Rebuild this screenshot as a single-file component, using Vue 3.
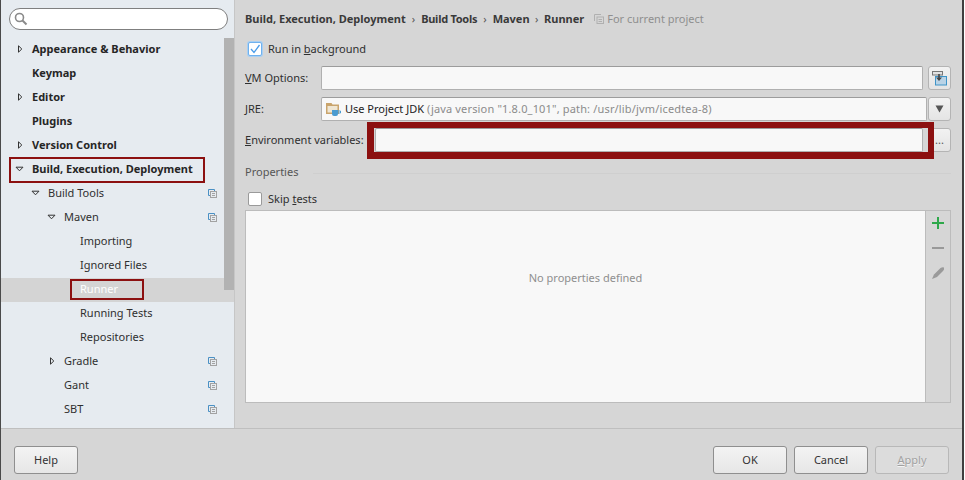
<script setup>
const nodes = [
  { label: 'Appearance & Behavior', depth: 0, bold: true, arrow: 'right' },
  { label: 'Keymap', depth: 0, bold: true },
  { label: 'Editor', depth: 0, bold: true, arrow: 'right' },
  { label: 'Plugins', depth: 0, bold: true },
  { label: 'Version Control', depth: 0, bold: true, arrow: 'right' },
  { label: 'Build, Execution, Deployment', depth: 0, bold: true, arrow: 'down', mark: 'wide' },
  { label: 'Build Tools', depth: 1, arrow: 'down', copy: true },
  { label: 'Maven', depth: 2, arrow: 'down', copy: true },
  { label: 'Importing', depth: 3 },
  { label: 'Ignored Files', depth: 3 },
  { label: 'Runner', depth: 3, selected: true, mark: 'small' },
  { label: 'Running Tests', depth: 3 },
  { label: 'Repositories', depth: 3 },
  { label: 'Gradle', depth: 2, arrow: 'right', copy: true },
  { label: 'Gant', depth: 2, copy: true },
  { label: 'SBT', depth: 2, copy: true },
]
</script>

<template>
  <div class="window">
    <div class="main">
      <aside class="side">
        <div class="search">
          <svg class="mag" width="14" height="14" viewBox="0 0 14 14">
            <circle cx="5.5" cy="5.5" r="4" fill="none" stroke="#8a8a8a" stroke-width="1.6" />
            <path d="M8.5 8.5 L12.5 12.5" stroke="#8a8a8a" stroke-width="2" />
          </svg>
        </div>
        <div class="tree-wrap">
          <div class="tree">
            <div
              v-for="n in nodes"
              :key="n.label"
              class="row"
              :class="['d' + n.depth, { bold: n.bold, selected: n.selected }]"
            >
              <span class="arrow-slot">
                <svg v-if="n.arrow === 'right'" width="7" height="8" viewBox="0 0 7 8">
                  <path d="M2.5 0.8 L5.8 4 L2.5 7.2 Z" fill="#e6ebf0" stroke="#333" />
                </svg>
                <svg v-if="n.arrow === 'down'" width="9" height="8" viewBox="0 0 9 8">
                  <path d="M1 2.2 L8 2.2 L4.5 5.8 Z" fill="#e6ebf0" stroke="#333" />
                </svg>
              </span>
              <span class="label" :class="{ 'mark-small': n.mark === 'small' }">{{ n.label }}</span>
              <svg v-if="n.copy" class="copy" width="9" height="9" viewBox="0 0 9 9">
                <path d="M2 6.5 H0.5 V0.5 H6.5 V2" fill="none" stroke="#4a90c4" />
                <rect x="2.5" y="2.5" width="6" height="6" fill="none" stroke="#a2a2a2" />
                <path d="M4 4.5 H7 M4 6.5 H7" stroke="#a2a2a2" />
              </svg>
              <span v-if="n.mark === 'wide'" class="mark-wide"></span>
            </div>
          </div>
          <div class="scrollbar"><div class="thumb"></div></div>
        </div>
      </aside>

      <section class="content">
        <div class="crumbs">
          <b>Build, Execution, Deployment</b><i>›</i><b class="tight">Build Tools</b><i>›</i><b>Maven</b><i class="sep-last">›</i><b>Runner</b>
          <svg class="crumb-icon" width="10" height="10" viewBox="0 0 10 10">
            <path d="M0.5 7 V0.5 H7" fill="none" stroke="#b0b0b0" />
            <rect x="3" y="3" width="6.5" height="6.5" fill="none" stroke="#b0b0b0" />
            <path d="M4.5 5.5 H8 M4.5 7.5 H8" stroke="#b0b0b0" />
          </svg>
          <span class="for-project">For current project</span>
        </div>

        <label class="check-row first">
          <span class="check on">
            <svg width="12" height="12" viewBox="0 0 12 12">
              <path d="M2 6 L5 9.5 L10.5 2" fill="none" stroke="#4a9be8" stroke-width="1.3" />
            </svg>
          </span>
          <span>Run in <u>b</u>ackground</span>
        </label>

        <div class="form-row">
          <span class="field-label"><u>V</u>M Options:</span>
          <div class="input grow"></div>
          <div class="side-btn">
            <svg width="17" height="17" viewBox="0 0 17 17">
              <rect x="4.5" y="6.5" width="11" height="8.5" fill="#b9d3e6" stroke="#3e94c8" />
              <rect x="1.5" y="1.5" width="10" height="3.5" fill="#e2e2e2" stroke="#777" />
              <path d="M8 4 V9.5" stroke="#444" stroke-width="1.6" />
              <path d="M5 7.5 H11 L8 11 Z" fill="#444" />
            </svg>
          </div>
        </div>

        <div class="form-row">
          <span class="field-label"><u>J</u>RE:</span>
          <div class="input grow combo">
            <svg class="jdk" width="15" height="15" viewBox="0 0 15 15">
              <path d="M0 1 H5.5 L6.5 2.5 H13 V12 H0 Z" fill="#c9a46c" />
              <rect x="1.5" y="4" width="10" height="6.5" fill="#efe6d3" />
              <path d="M6 8 H12 V12 Q12 14 10 14 H8 Q6 14 6 12 Z" fill="#4a9bd0" />
              <path d="M12 9 H14.5 V11 H12" fill="none" stroke="#4a9bd0" />
            </svg>
            <span class="jdk-name">Use Project JDK</span>
            <span class="jdk-note">(java version "1.8.0_101", path: /usr/lib/jvm/icedtea-8)</span>
          </div>
          <div class="side-btn attached">
            <svg width="9" height="8" viewBox="0 0 9 8"><path d="M0.5 0.5 H8.5 L4.5 7.5 Z" fill="#555" /></svg>
          </div>
        </div>

        <div class="form-row env">
          <span class="field-label wide"><u>E</u>nvironment variables:</span>
          <div class="env-slot">
            <div class="input grow"></div>
            <div class="env-mark"></div>
          </div>
          <div class="side-btn dots">...</div>
        </div>

        <div class="group-title">
          <span>Properties</span>
          <span class="rule"></span>
        </div>

        <label class="check-row skip">
          <span class="check"></span>
          <span>Skip <u>t</u>ests</span>
        </label>

        <div class="table">
          <div class="table-body">No properties defined</div>
          <div class="table-tools">
            <svg width="14" height="14" viewBox="0 0 14 14">
              <path d="M7 1 V13 M1 7 H13" stroke="#2ea84a" stroke-width="2" />
            </svg>
            <svg width="14" height="14" viewBox="0 0 14 14">
              <path d="M1 7 H13" stroke="#999" stroke-width="2" />
            </svg>
            <svg width="14" height="14" viewBox="0 0 14 14">
              <path d="M1 13 L3 8.5 L9.5 2 Q11.5 0.8 13 1.5 Q13.5 3.5 12 5 L6 11 Z" fill="#9a9a9a" />
            </svg>
          </div>
        </div>
      </section>
    </div>

    <footer class="footer">
      <button class="btn help">Help</button>
      <span class="spacer"></span>
      <button class="btn">OK</button>
      <button class="btn">Cancel</button>
      <button class="btn disabled"><u>A</u>pply</button>
    </footer>
  </div>
</template>

<style>
html, body { margin: 0; background: #fff; overflow: hidden; }
</style>

<style scoped>
.window {
  width: 961px; height: 480px; box-sizing: content-box;
  border-left: 1px solid #4a4a4a; border-right: 2px solid #3f3f3f;
  display: flex; flex-direction: column;
  background: #d6d6d6; color: #2f2f2f;
  font: 11px/16px "Noto Sans", "Open Sans", sans-serif;
}
.main { flex: 1; display: flex; min-height: 0; border-bottom: 1px solid #bfbfbf; }
.side { width: 233px; background: #e6ebf0; border-right: 1px solid #c6c6c6; display: flex; flex-direction: column; }
.search {
  margin: 8px 6px 0 8px; height: 20px; border: 1px solid #7f7f7f; border-radius: 11px;
  background: #fff; display: flex; align-items: center; padding-left: 4px; flex: none;
}
.tree-wrap { flex: 1; display: flex; margin-top: 8px; min-height: 0; }
.tree { flex: 1; min-width: 0; }
.scrollbar { width: 10px; flex: none; position: relative; z-index: 1; }
.thumb { height: 252px; background: #b2b2b2; }
.row { height: 24px; box-sizing: border-box; padding-top: 3px; display: flex; align-items: flex-start; position: relative; }
.row.bold { font-weight: 700; color: #262626; }
.arrow-slot { width: 9px; height: 16px; display: flex; align-items: center; justify-content: center; flex: none; margin-right: 8px; }
.d0 { padding-left: 14px; }
.d1 { padding-left: 30px; }
.d2 { padding-left: 46px; }
.d3 { padding-left: 62px; }
.selected { background: #d4d4d4; color: #fff; margin-right: -10px; }
.label { position: relative; }
.mark-small::after {
  content: ""; position: absolute; left: -10px; top: -2px; width: 74px; height: 21px;
  box-sizing: border-box; border: 2px solid #8c1010;
}
.mark-wide {
  position: absolute; left: 8px; top: -1px; width: 196px; height: 26px;
  box-sizing: border-box; border: 2px solid #8c1010;
}
.copy { position: absolute; left: 207px; top: 7px; }

.content { flex: 1; min-width: 0; padding: 11px 11px 0 10px; }
.crumbs { height: 16px; display: flex; align-items: center; font-size: 11px; }
.crumbs b { color: #3a3a3a; }
.crumbs b.tight { letter-spacing: -0.27px; }
.crumbs i { font-style: normal; margin: 0 6px; color: #555; }
.crumbs i.sep-last { margin: 0 5.5px; }
.crumb-icon { margin: 0 3px 0 10px; }
.for-project { color: #8f8f8f; }
.check-row { display: flex; align-items: center; gap: 6px; height: 16px; }
.first { margin: 14px 0 0 3px; }
.check {
  width: 12px; height: 12px; border: 1px solid #9a9a9a; border-radius: 2px; background: #fff;
  display: block; flex: none; position: relative;
}
.check.on { border-color: #6fb1ee; box-shadow: 0 0 0 1px #a9cff2; }
.check svg { display: block; }
.form-row { display: flex; align-items: center; height: 24px; margin-top: 7px; }
.first + .form-row { margin-top: 9px; }
.field-label { width: 76px; flex: none; }
.field-label.wide { width: 130px; }
.input {
  height: 24px; box-sizing: border-box; background: #f8f8f8;
  border: 1px solid #b0b0b0; border-top-color: #9c9c9c; border-radius: 2px;
}
.grow { flex: 1; min-width: 0; }
.combo { display: flex; align-items: center; padding-left: 4px; margin-right: 1px; }
.jdk { margin-right: 4px; }
.jdk-name { color: #222; }
.jdk-note { color: #8b8b8b; margin-left: 3px; letter-spacing: 0.16px; }
.side-btn {
  width: 23px; height: 24px; box-sizing: border-box; margin-left: 5px; flex: none;
  border: 1px solid #b4b4b4; border-radius: 3px;
  background: linear-gradient(#f2f2f2, #e4e4e4);
  display: flex; align-items: center; justify-content: center;
}
.side-btn.attached { margin-left: 0; }
.dots { color: #555; line-height: 14px; }
.env-slot { flex: 1; min-width: 0; display: flex; position: relative; }
.env-mark {
  position: absolute; left: -8px; top: -6px; right: -11px; bottom: -7px;
  border-style: solid; border-color: #8c1010; border-width: 6px 6px 7px 7px;
  box-sizing: border-box; pointer-events: none;
}
.group-title { display: flex; align-items: center; margin-top: 12px; height: 16px; color: #555; }
.rule { flex: 1; height: 1px; background: #cfcfcf; margin: 3px 0 0 15px; }
.skip { margin: 11px 0 0 3px; }
.table {
  height: 193px; margin-top: 3px; display: flex; box-sizing: border-box;
  border: 1px solid #bcbcbc;
}
.table-body {
  flex: 1; background: #f8f8f8; color: #8f8f8f;
  display: flex; align-items: flex-start; justify-content: center; padding-top: 59px; box-sizing: border-box;
}
.table-tools {
  width: 25px; flex: none; border-left: 1px solid #bcbcbc; box-sizing: border-box;
  display: flex; flex-direction: column; align-items: center; gap: 11px; padding-top: 5px;
}
.footer { height: 51px; box-sizing: border-box; flex: none; display: flex; align-items: flex-start; padding: 17px 13px 0 13px; gap: 7px; }
.spacer { flex: 1; }
.btn {
  width: 74px; height: 28px; padding: 0; border: 1px solid #8f8f8f; border-radius: 3px;
  background: linear-gradient(#f3f3f3, #e6e6e6); color: #333;
  font: inherit;
}
.btn.help { width: 64px; }
.btn.disabled { color: #a0a0a0; border-color: #b8b8b8; background: #dcdcdc; text-shadow: 0 1px 0 #f4f4f4; }
</style>
